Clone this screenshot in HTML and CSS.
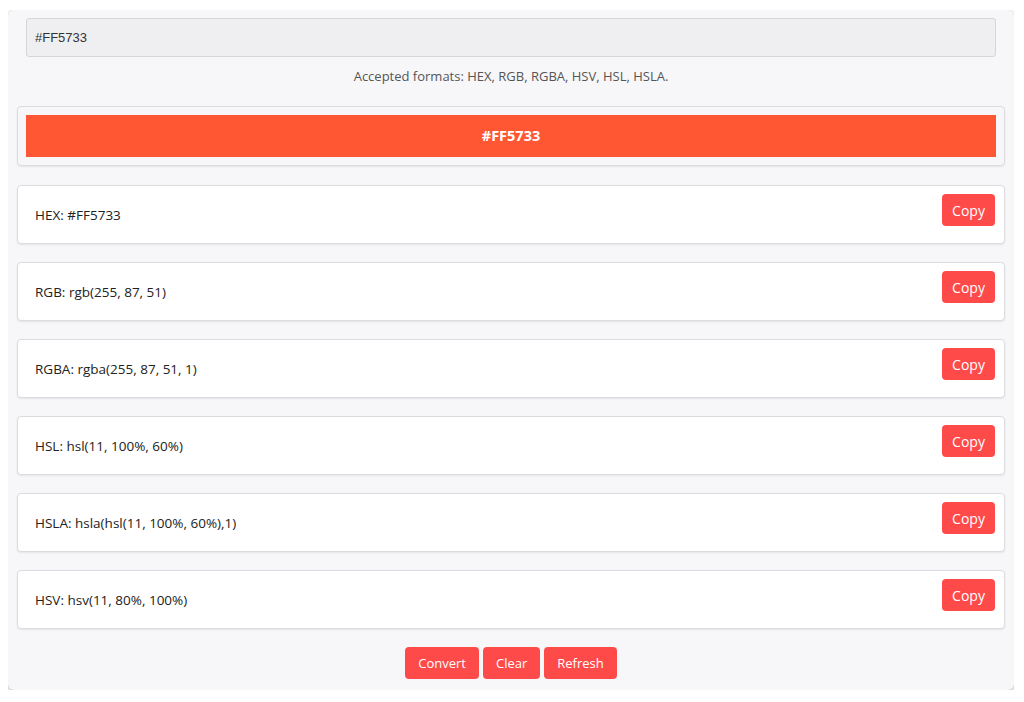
FILE: index.html
```html
<!DOCTYPE html>
<html lang="en">
<head>
  <meta charset="UTF-8">
  <title>Color Converter</title>
  <meta name="viewport" content="width=device-width, initial-scale=1.0">
  <link rel="stylesheet" href="styles.css">
</head>
<body>
  <div class="converter">
    <input type="text" id="colorInput" class="color-input" value="#FF5733">
    <p class="hint">Accepted formats: HEX, RGB, RGBA, HSV, HSL, HSLA.</p>

    <div class="preview-card">
      <div class="preview" id="preview">#FF5733</div>
    </div>

    <div class="result-row">
      <span class="result-text">HEX: #FF5733</span>
      <button class="copy-btn">Copy</button>
    </div>
    <div class="result-row">
      <span class="result-text">RGB: rgb(255, 87, 51)</span>
      <button class="copy-btn">Copy</button>
    </div>
    <div class="result-row">
      <span class="result-text">RGBA: rgba(255, 87, 51, 1)</span>
      <button class="copy-btn">Copy</button>
    </div>
    <div class="result-row">
      <span class="result-text">HSL: hsl(11, 100%, 60%)</span>
      <button class="copy-btn">Copy</button>
    </div>
    <div class="result-row">
      <span class="result-text">HSLA: hsla(hsl(11, 100%, 60%),1)</span>
      <button class="copy-btn">Copy</button>
    </div>
    <div class="result-row">
      <span class="result-text">HSV: hsv(11, 80%, 100%)</span>
      <button class="copy-btn">Copy</button>
    </div>

    <div class="actions">
      <button class="action-btn">Convert</button>
      <button class="action-btn">Clear</button>
      <button class="action-btn">Refresh</button>
    </div>
  </div>
</body>
</html>
```

FILE: styles.css
```css
body {
  margin: 10px 10px 0 8px;
  background-color: #ffffff;
  font-family: "Open Sans", "Noto Sans", sans-serif;
  color: #222;
}

.converter {
  background-color: #f7f7f9;
  border-radius: 6px;
  box-shadow: 0 4px 10px rgba(0, 0, 0, 0.25), 0 0 2px rgba(0, 0, 0, 0.15);
  padding: 8px 9px 11px;
}

.color-input {
  display: block;
  box-sizing: border-box;
  width: calc(100% - 18px);
  height: 39px;
  margin: 0 9px;
  padding: 0 8px;
  font-family: "Liberation Sans", Arial, sans-serif;
  font-size: 13px;
  color: #333;
  background-color: #efeff1;
  border: 1px solid #d6d6da;
  border-radius: 3px;
  outline: none;
}

.hint {
  margin: 10px 0 21px;
  text-align: center;
  font-size: 13px;
  color: #555;
}

.preview-card {
  border: 1px solid #dcdce0;
  border-radius: 4px;
  padding: 8px;
  margin-bottom: 19px;
  box-shadow: 0 1px 2px rgba(0, 0, 0, 0.08);
}

.preview {
  height: 42px;
  line-height: 42px;
  background-color: #FF5733;
  color: #fff;
  text-align: center;
  font-weight: 700;
  font-size: 14.5px;
}

.result-row {
  display: flex;
  justify-content: space-between;
  align-items: center;
  box-sizing: border-box;
  height: 59px;
  padding: 0 9px 0 17px;
  margin-bottom: 18px;
  background-color: #fff;
  border: 1px solid #dcdce0;
  border-radius: 4px;
  box-shadow: 0 1px 2px rgba(0, 0, 0, 0.08);
}

.result-text {
  font-size: 13.5px;
  margin-top: 1px;
}

.copy-btn,
.action-btn {
  font-family: "Open Sans", "Noto Sans", sans-serif;
  font-weight: 500;
  background-color: #ff4a4a;
  color: #fff;
  border: none;
  border-radius: 4px;
  cursor: pointer;
}

.copy-btn {
  align-self: flex-start;
  margin-top: 8px;
  width: 53px;
  height: 32px;
  font-size: 14px;
}

.actions {
  display: flex;
  justify-content: center;
  gap: 4px;
}

.action-btn {
  height: 32px;
  padding: 0 13px;
  font-size: 13px;
}
```
